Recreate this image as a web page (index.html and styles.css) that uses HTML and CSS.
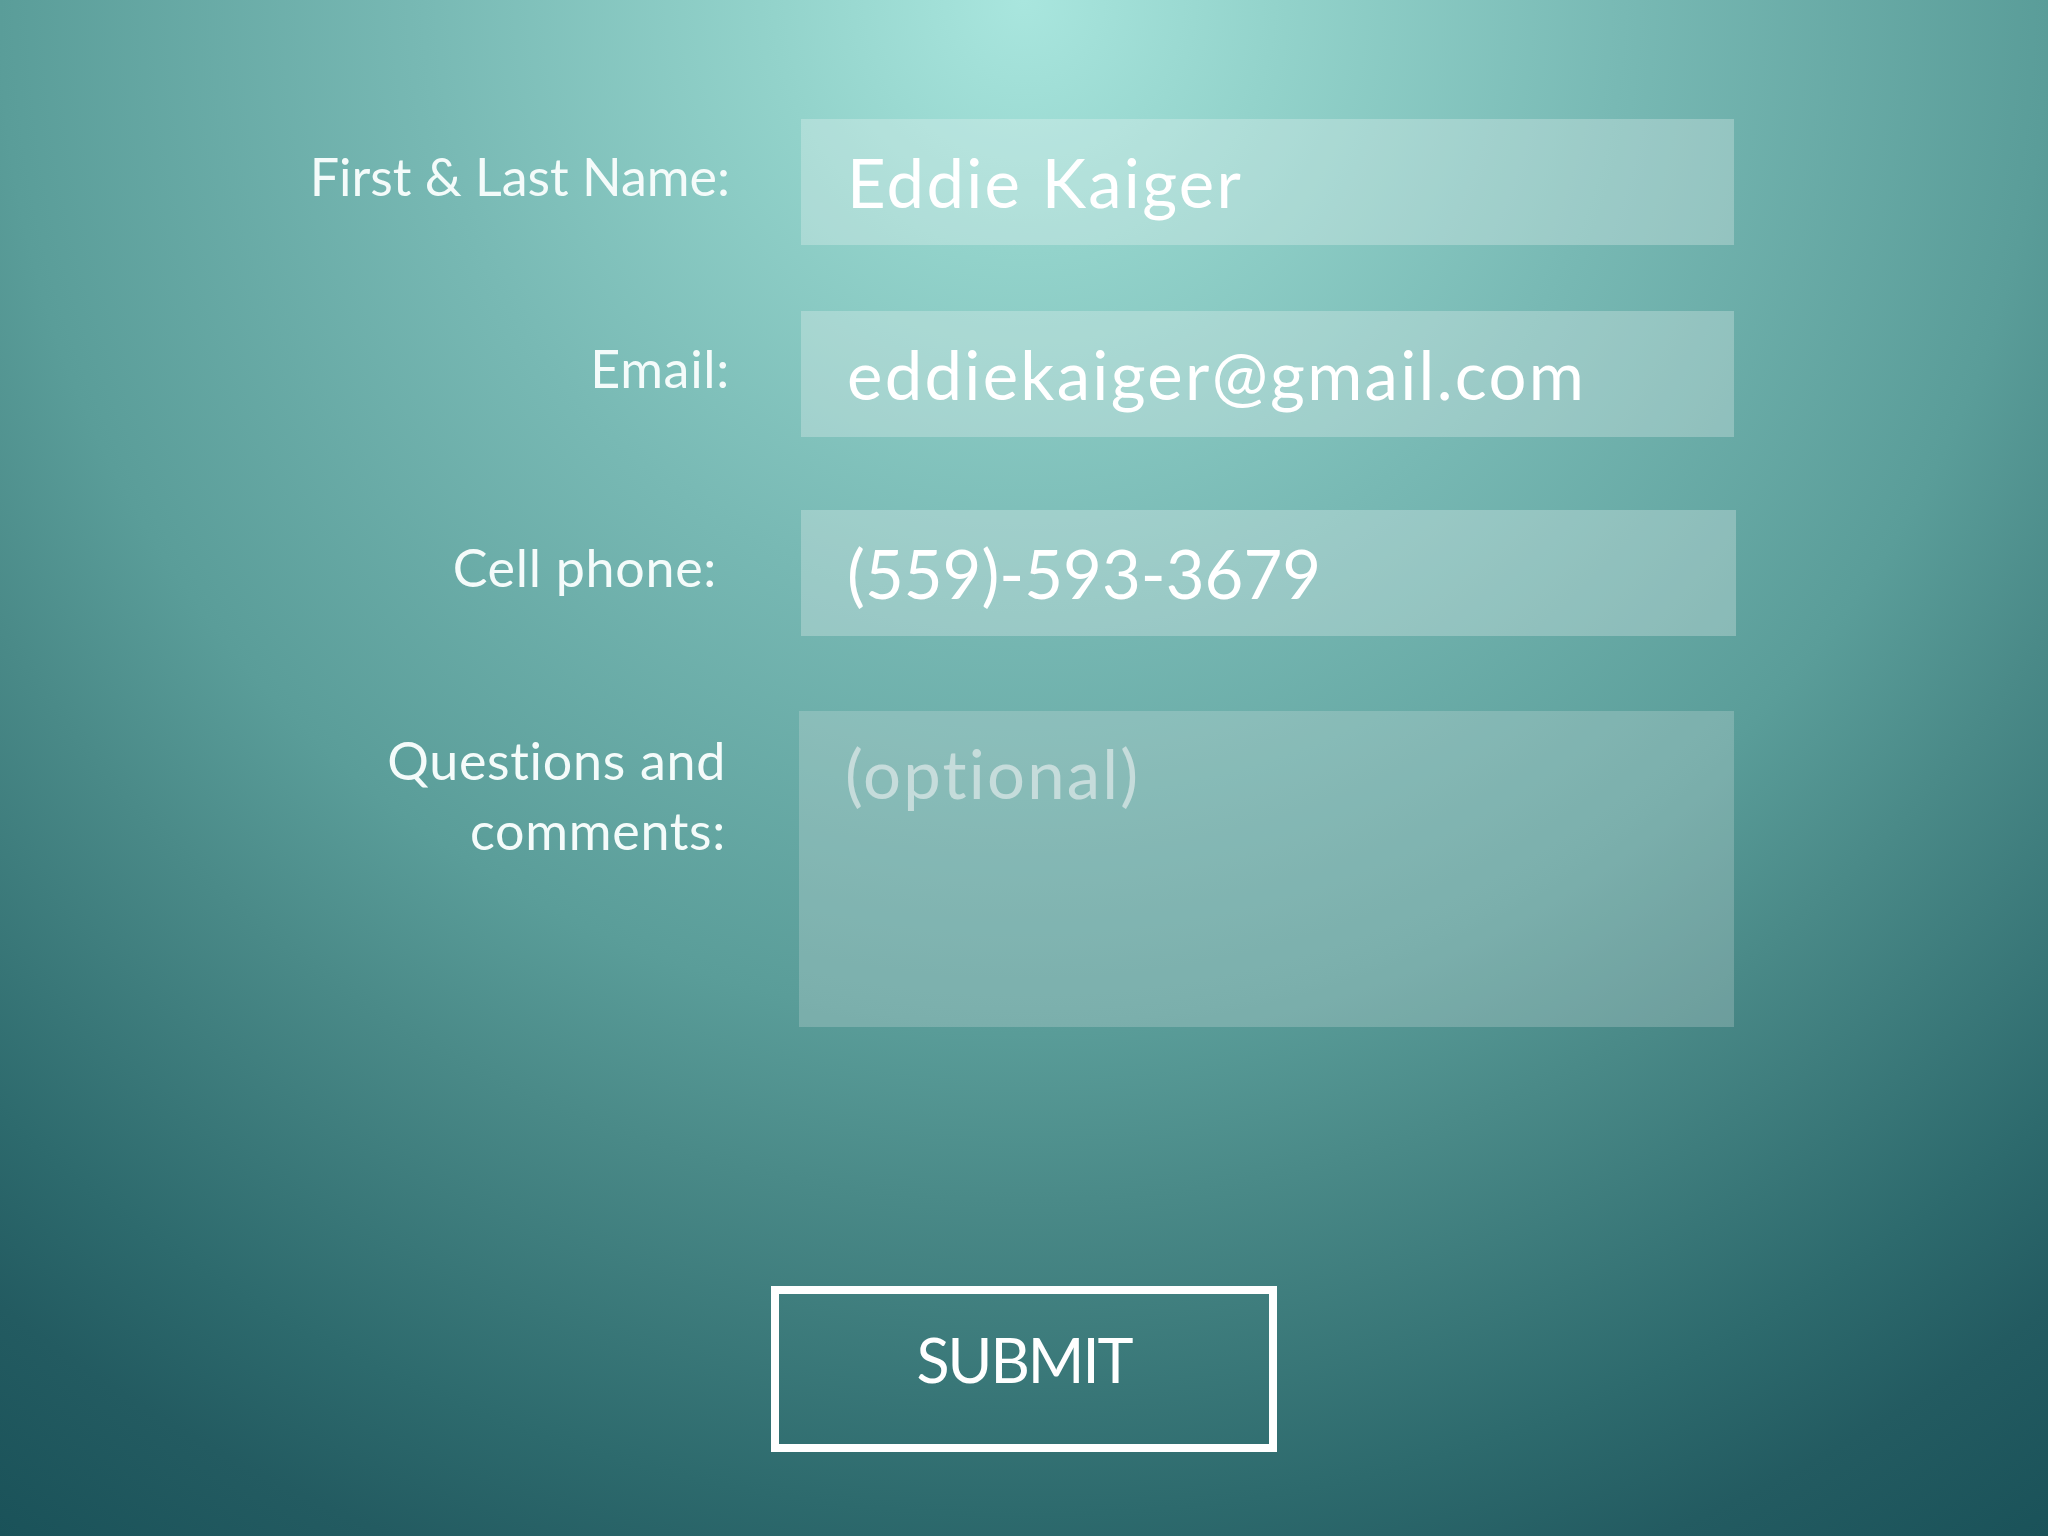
FILE: index.html
```html
<!DOCTYPE html>
<html lang="en">
<head>
<meta charset="utf-8">
<title>Contact form</title>
<link rel="stylesheet" href="styles.css">
</head>
<body>
<form class="form">
  <div class="row row-name">
    <label class="label label-name" for="name">First &amp; Last Name:</label>
    <input class="field field-wide" id="name" type="text" value="Eddie Kaiger">
  </div>
  <div class="row row-email">
    <label class="label" for="email">Email:</label>
    <input class="field field-wide" id="email" type="text" value="eddiekaiger@gmail.com">
  </div>
  <div class="row row-phone">
    <label class="label label-phone" for="phone">Cell phone:</label>
    <input class="field field-phone" id="phone" type="text" value="(559)-593-3679">
  </div>
  <div class="row row-questions">
    <label class="label label-multi" for="questions">Questions and<br>comments:</label>
    <textarea class="field field-area" id="questions" placeholder="(optional)"></textarea>
  </div>
  <div class="actions">
    <button class="submit" type="button">SUBMIT</button>
  </div>
</form>
</body>
</html>
```

FILE: styles.css
```css
html, body {
  margin: 0;
  padding: 0;
}

body {
  min-height: 1536px;
  font-family: Lato, "Open Sans", sans-serif;
  color: #ffffff;
  background: radial-gradient(circle at 50% 0,
    #a9e6de 0px,
    #93d3cb 250px,
    #78b9b4 600px,
    #5a9d99 1024px,
    #4a8a88 1200px,
    #2d6a6d 1515px,
    #235b61 1660px,
    #1a5259 1846px);
}

.form {
  padding-top: 119px;
  display: flex;
  flex-direction: column;
}

.row {
  display: grid;
  grid-template-columns: 730px 935px;
  column-gap: 71px;
  align-items: center;
}

.row-email { margin-top: 66px; }
.row-phone { margin-top: 73px; }
.row-questions { margin-top: 75px; align-items: start; }

.label {
  text-align: right;
  font-size: 52px;
  font-weight: 400;
  letter-spacing: 0.7px;
  color: #f4fbfa;
  padding-bottom: 12px;
}

.label-name { letter-spacing: 0; }

.label-phone { padding-right: 13px; }

.label-multi {
  line-height: 70px;
  padding: 14px 4px 0 0;
}

.field {
  box-sizing: border-box;
  display: block;
  width: 933px;
  height: 126px;
  margin: 0;
  padding: 0 46px;
  border: none;
  outline: none;
  border-radius: 0;
  background: rgba(250, 252, 252, 0.27);
  font-family: Lato, "Open Sans", sans-serif;
  font-size: 67px;
  font-weight: 400;
  color: #ffffff;
}

.field-wide { letter-spacing: 2.3px; }

.field-phone { width: 935px; }

.field-area {
  width: 935px;
  height: 316px;
  margin-left: -2px;
  padding: 22px 46px;
  resize: none;
  line-height: normal;
  letter-spacing: 2.2px;
  background: rgba(228, 234, 234, 0.24);
}

.field-area::placeholder {
  color: rgba(235, 240, 240, 0.62);
}

.actions {
  margin-top: 259px;
  display: flex;
  justify-content: center;
}

.submit {
  box-sizing: border-box;
  width: 506px;
  height: 166px;
  margin: 0;
  padding: 0 0 20px;
  border: 8px solid #ffffff;
  border-radius: 0;
  background: transparent;
  font-family: Lato, "Open Sans", sans-serif;
  font-size: 61px;
  font-weight: 400;
  letter-spacing: -2px;
  color: #ffffff;
  cursor: pointer;
}
```
